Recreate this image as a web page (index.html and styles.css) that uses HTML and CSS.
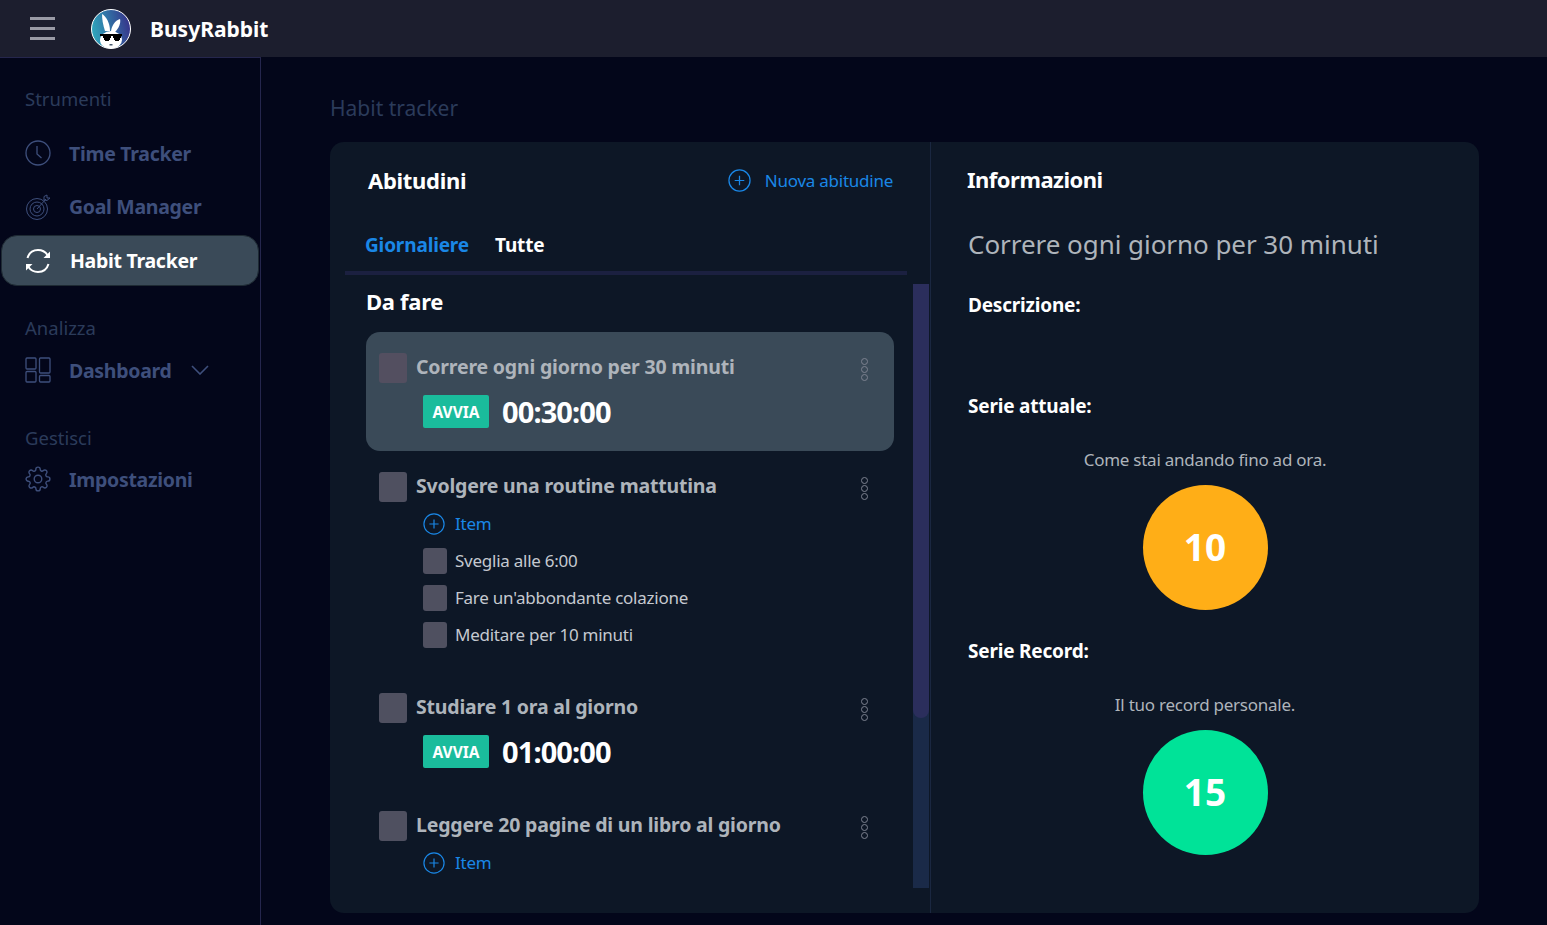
FILE: index.html
```html
<!DOCTYPE html>
<html lang="it">
<head>
    <meta charset="UTF-8">
    <title>BusyRabbit</title>
    <link rel="stylesheet" href="styles.css">
</head>
<body>
    <header class="topbar">
        <button class="burger"><span></span><span></span><span></span></button>
        <svg class="logo" viewBox="0 0 40 40">
            <defs>
                <linearGradient id="logoBg" x1="0" y1="0.6" x2="1" y2="0.4">
                    <stop offset="0" stop-color="#2fa9bd"/>
                    <stop offset="1" stop-color="#36338a"/>
                </linearGradient>
                <clipPath id="logoClip"><circle cx="20" cy="20" r="19.5"/></clipPath>
            </defs>
            <circle cx="20" cy="20" r="19.5" fill="url(#logoBg)"/>
            <g clip-path="url(#logoClip)">
                <path d="M11 5c4 2 8 9 8 17h-5C12 16 11 10 11 5z" fill="#fff"/>
                <path d="M29 10c1 4-1 9-5 13h-4c0-5 4-12 9-13z" fill="#fff"/>
                <ellipse cx="20" cy="31" rx="11" ry="9" fill="#fff"/>
                <path d="M9 25h22v2h-1v2h-1v2h-1v1h-4v-1h-1v-2h-1v-2h-2v2h-1v2h-1v1h-4v-1h-1v-2h-1v-2H9z" fill="#000"/>
                <path d="M18.500 35h3v1.500h-3z" fill="#46586f"/>
            </g>
            <circle cx="20" cy="20" r="19.500" fill="none" stroke="#fff" stroke-width="1"/>
        </svg>
        <span class="brand">BusyRabbit</span>
    </header>

    <div class="layout">
        <nav class="sidebar">
            <div class="nav-title first">Strumenti</div>
            <a class="nav-item">
                <svg class="nav-icon" viewBox="0 0 26 26"><circle cx="13" cy="13" r="12"/><path d="M12 6v8l4.500 4"/></svg>
                Time Tracker
            </a>
            <a class="nav-item">
                <svg class="nav-icon thin" viewBox="0 0 26 26"><circle cx="12" cy="15" r="10.500"/><circle cx="12" cy="15" r="7"/><circle cx="12" cy="15" r="3.500"/><path d="M12 15 21 5M19 6V2.500l3-1.500v3h3l-3 2.500z"/></svg>
                Goal Manager
            </a>
            <a class="nav-item active">
                <svg class="nav-icon" viewBox="0 0 26 26"><path d="M2.500 10C4 5 8 2 13 2c4 0 7.500 2 9.500 5"/><path d="M25 3.500V10h-6.500z" class="solid"/><path d="M23.500 16C22 21 18 24 13 24c-4 0-7.500-2-9.500-5"/><path d="M1 22.500V16h6.500z" class="solid"/></svg>
                Habit Tracker
            </a>

            <div class="nav-title">Analizza</div>
            <a class="nav-item compact">
                <svg class="nav-icon" viewBox="0 0 26 26"><rect x="1" y="1" width="10" height="11" rx="1"/><rect x="14.500" y="1" width="10.500" height="15" rx="1"/><rect x="1" y="14.500" width="10" height="10.500" rx="1"/><rect x="14.500" y="18.500" width="10.500" height="6.500" rx="1"/></svg>
                Dashboard
                <svg class="chevron" viewBox="0 0 18 10"><path d="M1 1l8 8 8-8"/></svg>
            </a>

            <div class="nav-title spaced">Gestisci</div>
            <a class="nav-item compact">
                <svg class="nav-icon" viewBox="0 0 24 24"><circle cx="12" cy="12" r="3.500"/><path d="M19.400 15a1.650 1.650 0 0 0 .33 1.820l.06.06a2 2 0 0 1 0 2.830 2 2 0 0 1-2.830 0l-.06-.06a1.650 1.650 0 0 0-1.820-.33 1.650 1.650 0 0 0-1 1.510V21a2 2 0 0 1-2 2 2 2 0 0 1-2-2v-.09A1.650 1.650 0 0 0 9 19.400a1.650 1.650 0 0 0-1.820.33l-.06.06a2 2 0 0 1-2.830 0 2 2 0 0 1 0-2.830l.06-.06a1.650 1.650 0 0 0 .33-1.820 1.650 1.650 0 0 0-1.510-1H3a2 2 0 0 1-2-2 2 2 0 0 1 2-2h.09A1.650 1.650 0 0 0 4.600 9a1.650 1.650 0 0 0-.33-1.820l-.06-.06a2 2 0 0 1 0-2.830 2 2 0 0 1 2.830 0l.06.06a1.650 1.650 0 0 0 1.820.33H9a1.650 1.650 0 0 0 1-1.510V3a2 2 0 0 1 2-2 2 2 0 0 1 2 2v.09a1.650 1.650 0 0 0 1 1.510 1.650 1.650 0 0 0 1.820-.33l.06-.06a2 2 0 0 1 2.830 0 2 2 0 0 1 0 2.830l-.06.06a1.650 1.650 0 0 0-.33 1.820V9a1.650 1.650 0 0 0 1.510 1H21a2 2 0 0 1 2 2 2 2 0 0 1-2 2h-.09a1.650 1.650 0 0 0-1.510 1z"/></svg>
                Impostazioni
            </a>
        </nav>

        <main class="content">
            <h2 class="page-title">Habit tracker</h2>
            <div class="card">
                <section class="habits">
                    <div class="habits-head">
                        <h3>Abitudini</h3>
                        <a class="add-link">
                            <svg class="plus big" viewBox="0 0 24 24"><circle cx="12" cy="12" r="11"/><path d="M12 7v10M7 12h10"/></svg>
                            Nuova abitudine
                        </a>
                    </div>
                    <div class="tabs">
                        <span class="tab selected">Giornaliere</span>
                        <span class="tab">Tutte</span>
                    </div>
                    <div class="list-wrap">
                        <div class="list">
                            <h4>Da fare</h4>

                            <div class="habit current">
                                <div class="habit-row">
                                    <span class="check"></span>
                                    <span class="habit-name">Correre ogni giorno per 30 minuti</span>
                                    <span class="dots"><i></i><i></i><i></i></span>
                                </div>
                                <div class="timer">
                                    <button class="start">AVVIA</button>
                                    <span class="time">00:30:00</span>
                                </div>
                            </div>

                            <div class="habit">
                                <div class="habit-row">
                                    <span class="check"></span>
                                    <span class="habit-name">Svolgere una routine mattutina</span>
                                    <span class="dots"><i></i><i></i><i></i></span>
                                </div>
                                <div class="subs">
                                    <a class="add-item"><svg class="plus" viewBox="0 0 24 24"><circle cx="12" cy="12" r="11"/><path d="M12 7v10M7 12h10"/></svg>Item</a>
                                    <div class="sub"><span class="check small"></span>Sveglia alle 6:00</div>
                                    <div class="sub"><span class="check small"></span>Fare un'abbondante colazione</div>
                                    <div class="sub"><span class="check small"></span>Meditare per 10 minuti</div>
                                </div>
                            </div>

                            <div class="habit">
                                <div class="habit-row">
                                    <span class="check"></span>
                                    <span class="habit-name">Studiare 1 ora al giorno</span>
                                    <span class="dots"><i></i><i></i><i></i></span>
                                </div>
                                <div class="timer">
                                    <button class="start">AVVIA</button>
                                    <span class="time">01:00:00</span>
                                </div>
                            </div>

                            <div class="habit">
                                <div class="habit-row">
                                    <span class="check"></span>
                                    <span class="habit-name">Leggere 20 pagine di un libro al giorno</span>
                                    <span class="dots"><i></i><i></i><i></i></span>
                                </div>
                                <div class="subs">
                                    <a class="add-item"><svg class="plus" viewBox="0 0 24 24"><circle cx="12" cy="12" r="11"/><path d="M12 7v10M7 12h10"/></svg>Item</a>
                                </div>
                            </div>
                        </div>
                        <div class="scrollbar"><div class="thumb"></div></div>
                    </div>
                </section>

                <section class="info">
                    <h3>Informazioni</h3>
                    <div class="info-name">Correre ogni giorno per 30 minuti</div>
                    <div class="info-label desc">Descrizione:</div>
                    <div class="info-label">Serie attuale:</div>
                    <p class="info-note">Come stai andando fino ad ora.</p>
                    <div class="streak orange">10</div>
                    <div class="info-label record">Serie Record:</div>
                    <p class="info-note">Il tuo record personale.</p>
                    <div class="streak green">15</div>
                </section>
            </div>
        </main>
    </div>
</body>
</html>
```

FILE: styles.css
```css
* {
    box-sizing: border-box;
}

html, body {
    height: 100%;
}

body {
    margin: 0;
    font-family: "Noto Sans", sans-serif;
    background: #03061a;
    color: #fff;
    overflow: hidden;
}

.topbar {
    height: 57px;
    background: #1c1e2e;
    display: flex;
    align-items: center;
    padding-left: 30px;
}

.burger {
    width: 25px;
    height: 23px;
    padding: 0;
    border: none;
    background: none;
    display: flex;
    flex-direction: column;
    justify-content: space-between;
    margin-right: 36px;
}

.burger span {
    display: block;
    height: 3px;
    background: #9a9ba6;
}

.logo {
    width: 40px;
    height: 40px;
    margin-right: 19px;
}

.brand {
    font-size: 21px;
    font-weight: 700;
}

.layout {
    display: flex;
    height: 868px;
}

.sidebar {
    width: 261px;
    flex-shrink: 0;
    background: #03061a;
    border-top: 1px solid #25264d;
    border-right: 1px solid #25264d;
    padding: 0 1px;
}

.nav-title {
    font-size: 18.500px;
    line-height: 24px;
    color: #2b3b5a;
    padding-left: 24px;
    margin-top: 30px;
    margin-bottom: 10px;
}

.nav-title.first {
    margin-top: 29px;
    margin-bottom: 17px;
}

.nav-title.spaced {
    margin-top: 36px;
    margin-bottom: 9px;
}

.nav-item {
    display: flex;
    align-items: center;
    height: 50px;
    margin-bottom: 3.500px;
    padding-left: 24px;
    font-size: 19.500px;
    font-weight: 700;
    letter-spacing: -0.3px;
    color: #3e4f7c;
}

.nav-item.compact {
    height: 40px;
    margin-bottom: 0;
}

.nav-item.active {
    height: 51px;
    color: #fff;
    background: #3a4a58;
    border: 1px solid #1e2a33;
    border-radius: 16px;
    padding-left: 23px;
    margin-bottom: 0;
}

.nav-icon {
    width: 26px;
    height: 26px;
    margin-right: 18px;
    fill: none;
    stroke: #3e4f7c;
    stroke-width: 1.3;
    flex-shrink: 0;
}

.nav-icon.thin {
    stroke-width: 1;
}

.nav-item.active .nav-icon {
    stroke: #fff;
    stroke-width: 2;
    margin-right: 19px;
}

.nav-item.active .nav-icon .solid {
    fill: #fff;
    stroke: none;
}

.chevron {
    width: 18px;
    height: 10px;
    margin-left: 19px;
    fill: none;
    stroke: #3e4f7c;
    stroke-width: 1.6;
}

.content {
    flex: 1;
    padding: 36px 68px 0 69px;
}

.page-title {
    margin: 0 0 19px;
    font-size: 21px;
    line-height: 30px;
    font-weight: 400;
    color: #2b3b5a;
}

.card {
    height: 771px;
    background: #0d1726;
    border-radius: 14px;
    display: flex;
}

.habits {
    width: 601px;
    border-right: 1px solid #1a2740;
    padding: 0 23px 0 15px;
    display: flex;
    flex-direction: column;
}

.habits-head {
    display: flex;
    justify-content: space-between;
    align-items: center;
    height: 79px;
    padding: 0 14px 2px 23px;
}

.habits-head h3 {
    margin-bottom: 2px;
}

h3 {
    margin: 0;
    font-size: 22px;
    font-weight: 700;
    letter-spacing: -0.3px;
}

.add-link, .add-item {
    display: flex;
    align-items: center;
    color: #1a87e6;
}

.add-link {
    font-size: 17px;
    letter-spacing: -0.25px;
}

.plus {
    width: 22px;
    height: 22px;
    margin-right: 14px;
    fill: none;
    stroke: #1a87e6;
    stroke-width: 1.3;
}

.plus.big {
    width: 23px;
    height: 23px;
}

.tabs {
    display: flex;
    gap: 26px;
    height: 54px;
    padding: 11px 0 0 20px;
    border-bottom: 4px solid #1b2040;
    font-size: 19px;
    font-weight: 700;
    letter-spacing: -0.15px;
    line-height: 27px;
}

.tab.selected {
    color: #1a87e6;
}

.list-wrap {
    flex: 1;
    display: flex;
    position: relative;
}

.list {
    width: 528px;
    margin-left: 21px;
}

h4 {
    margin: 0;
    padding-top: 11px;
    height: 57px;
    font-size: 22px;
    line-height: 30px;
    font-weight: 700;
    letter-spacing: -0.3px;
}

.habit {
    padding: 21px 13px 0;
    border-radius: 14px;
    margin-bottom: 19px;
}

.habit.current {
    background: #3a4a58;
    height: 119px;
    margin-bottom: 0;
}

.habit.current .check {
    background: #534f60;
}

.habit-row {
    display: flex;
    align-items: center;
    height: 30px;
}

.check {
    width: 28px;
    height: 30px;
    border-radius: 3px;
    background: #4f5060;
    margin-right: 9px;
    flex-shrink: 0;
}

.check.small {
    width: 24px;
    height: 26px;
    margin-right: 8px;
}

.habit-name {
    flex: 1;
    padding-bottom: 4px;
    font-size: 19.500px;
    font-weight: 700;
    letter-spacing: -0.2px;
    color: #aeb4bb;
}

.dots {
    display: flex;
    flex-direction: column;
    gap: 1px;
    margin: 2px 13px 0 0;
}

.dots i {
    display: block;
    width: 7px;
    height: 7px;
    border: 1px solid #7d8290;
    border-radius: 50%;
}

.timer {
    display: flex;
    align-items: center;
    margin: 9px 0 2px 44px;
}

.start {
    width: 66px;
    height: 33px;
    padding: 0;
    border: none;
    border-radius: 2px;
    background: #1abc9c;
    color: #fff;
    font: 700 15.500px "Noto Sans", sans-serif;
    margin-right: 13px;
}

.time {
    font-size: 29px;
    font-weight: 700;
    letter-spacing: -0.9px;
}

.subs {
    padding: 3px 0 0 44px;
}

.add-item, .sub {
    height: 37px;
    font-size: 17px;
    letter-spacing: -0.25px;
    display: flex;
    align-items: center;
}

.add-item .plus {
    margin-right: 10px;
}

.sub {
    color: #c5c9d0;
}

.scrollbar {
    position: absolute;
    left: 568px;
    top: 9px;
    bottom: 25px;
    width: 16px;
    background: #1a2a48;
}

.thumb {
    height: 434px;
    background: #2b2e5c;
    border-radius: 0 0 8px 8px;
}

.info {
    flex: 1;
    padding: 0 36px;
}

.info h3 {
    line-height: 30px;
    padding-top: 22px;
    height: 53px;
    letter-spacing: -0.5px;
}

.info-name {
    font-size: 26px;
    line-height: 36px;
    margin: 31px 0 0 1px;
    letter-spacing: -0.05px;
    color: #aeb4bb;
}

.info-label {
    font-size: 19px;
    font-weight: 700;
    letter-spacing: -0.2px;
    line-height: 26px;
    margin-left: 1px;
}

.info-label.desc {
    margin-top: 30px;
    margin-bottom: 75px;
}

.info-label.record {
    margin-top: 28px;
}

.info-note {
    margin: 29px 0 13px;
    text-align: center;
    font-size: 17px;
    line-height: 24px;
    letter-spacing: -0.25px;
    color: #aeb4bb;
}

.streak {
    width: 125px;
    height: 125px;
    margin: 0 auto;
    padding-bottom: 2px;
    border-radius: 50%;
    display: flex;
    align-items: center;
    justify-content: center;
    font-size: 37px;
    font-weight: 700;
}

.streak.orange {
    background: #ffae17;
}

.streak.green {
    background: #00e398;
}
```
